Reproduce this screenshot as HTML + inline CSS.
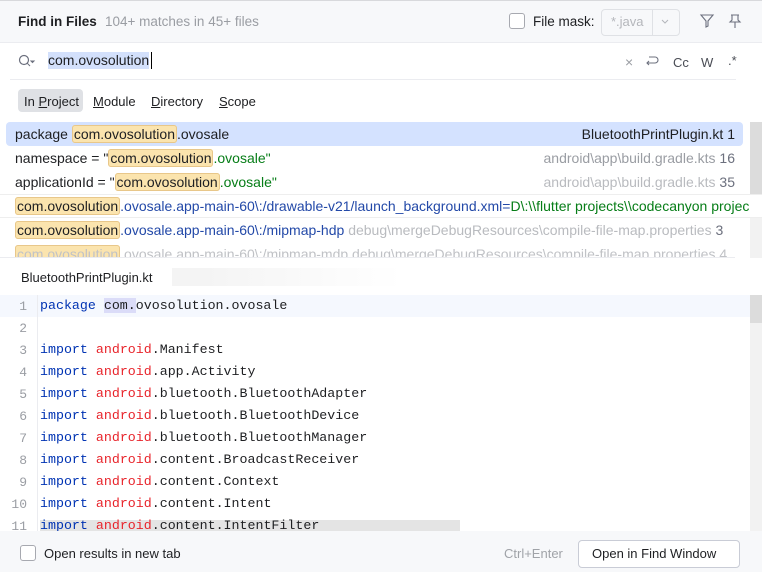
<!DOCTYPE html>
<html><head><meta charset="utf-8"><style>
*{margin:0;padding:0;box-sizing:border-box}
body{width:762px;height:572px;overflow:hidden;background:#fff;font-family:"Liberation Sans",sans-serif;font-size:13px;color:#1e1f22;position:relative}
.a{position:absolute;white-space:nowrap}
.r{font-size:14px}
.hl{background:#fbe4ae;border:1px solid #e8c78a;border-radius:3px;padding:0 1px}
.g{color:#9a9da3}
.gr{color:#067d17}
.bl{color:#2349a8}
.code{font-family:"Liberation Mono",monospace;font-size:13.3px}
.kw{color:#0033b3}.pk{color:#e8242b}
.ln{font-family:"Liberation Mono",monospace;font-size:13px;color:#9a9da3;width:27px;text-align:right}
u{text-decoration:underline}
</style></head><body>
<div class="a" style="left:0;top:0;width:762px;height:43px;background:#f7f8fa;border-bottom:1px solid #ebecf0;border-top:1px solid #d8d9dc"></div>
<div class="a" style="left:18px;top:14px;font-weight:bold;font-size:13.5px">Find in Files</div>
<div class="a g" style="left:105px;top:14px;font-size:13.5px">104+ matches in 45+ files</div>
<div class="a" style="left:509px;top:13px;width:16px;height:16px;border:1px solid #a7a9b0;border-radius:3px;background:#fff"></div>
<div class="a" style="left:533px;top:14px;font-size:13.5px">File mask:</div>
<div class="a" style="left:601px;top:9px;width:79px;height:27px;border:1px solid #dfe1e5;border-radius:4px;background:#f7f8fa"></div>
<div class="a" style="left:652px;top:10px;width:1px;height:25px;background:#dfe1e5"></div>
<div class="a" style="left:611px;top:14px;color:#b4b6bb">*.java</div>
<svg class="a" style="left:660px;top:18px" width="10" height="8"><path d="M2 2l3 3 3-3" stroke="#b4b6bb" fill="none"/></svg>
<svg class="a" style="left:699px;top:13px" width="16" height="16"><path d="M2 2h12l-5 6v5l-2 1V8z" stroke="#6c707e" fill="none" stroke-width="1.1"/></svg>
<svg class="a" style="left:727px;top:13px" width="16" height="16"><path d="M4 2h8M5 2v5l-2 2h10l-2-2V2M8 9v6" stroke="#6c707e" fill="none" stroke-width="1.1"/></svg>

<svg class="a" style="left:17px;top:53px" width="20" height="16"><circle cx="7" cy="7" r="4.5" stroke="#6c707e" fill="none" stroke-width="1.2"/><path d="M10 10l3 3M14 8l1.5 1.5L17 8z" stroke="#6c707e" fill="#6c707e"/></svg>
<div class="a r" style="left:48px;top:52px;background:#d3e0fb;line-height:17px">com.ovosolution</div>
<div class="a" style="left:151px;top:52px;width:1px;height:17px;background:#000"></div>
<div class="a g" style="left:625px;top:54px;font-size:14px">×</div>
<svg class="a" style="left:644px;top:53px" width="16" height="16"><path d="M5 4h6a3 3 0 010 6H3M5 8l-2 2 2 2" stroke="#6c707e" fill="none" stroke-width="1.1"/></svg>
<div class="a" style="left:673px;top:55px;color:#4a4d55">Cc</div>
<div class="a" style="left:701px;top:55px;color:#4a4d55">W</div>
<div class="a" style="left:728px;top:53px;color:#4a4d55">.*</div>
<div class="a" style="left:10px;top:79px;width:726px;height:1px;background:#ebecf0"></div>

<div class="a" style="left:18px;top:89px;width:65px;height:23px;background:#dfe1e5;border-radius:4px"></div>
<div class="a" style="left:24px;top:94px">In <u>P</u>roject</div>
<div class="a" style="left:93px;top:94px"><u>M</u>odule</div>
<div class="a" style="left:151px;top:94px"><u>D</u>irectory</div>
<div class="a" style="left:219px;top:94px"><u>S</u>cope</div>

<div class="a" style="left:6px;top:122px;width:737px;height:24px;background:#d4e2ff;border-radius:4px"></div>
<div class="a" style="left:750px;top:122px;width:12px;height:136px;background:#f2f2f2"></div>
<div class="a" style="left:750px;top:122px;width:12px;height:96px;background:#dcdcdc"></div>
<div class="a r" style="left:15px;top:126px">package <span class="hl">com.ovosolution</span>.ovosale</div>
<div class="a r" style="right:27px;top:126px">BluetoothPrintPlugin.kt 1</div>
<div class="a r" style="left:15px;top:150px">namespace = "<span class="hl">com.ovosolution</span><span class="gr">.ovosale"</span></div>
<div class="a g r" style="right:27px;top:150px">android\app\build.gradle.kts <span style="color:#6c707e">16</span></div>
<div class="a r" style="left:15px;top:174px">applicationId = "<span class="hl">com.ovosolution</span><span class="gr">.ovosale"</span></div>
<div class="a r" style="right:27px;top:174px;color:#b9bbbf">android\app\build.gradle.kts <span style="color:#6c707e">35</span></div>
<div class="a" style="left:0;top:194px;width:762px;height:24px;background:#fff;border-top:1px solid #eee;border-bottom:1px solid #eee"></div>
<div class="a r" style="left:15px;top:198px"><span class="hl">com.ovosolution</span><span class="bl">.ovosale.app-main-60\:/drawable-v21/launch_background.xml=</span><span class="gr">D\:\\flutter projects\\codecanyon projec</span></div>
<div class="a r" style="left:15px;top:222px"><span class="hl">com.ovosolution</span><span class="bl">.ovosale.app-main-60\:/mipmap-hdp</span> <span style="color:#b9bbbf">debug\mergeDebugResources\compile-file-map.properties</span> <span style="color:#6c707e">3</span></div>
<div class="a" style="left:0;top:242px;width:750px;height:16px;overflow:hidden"><div class="a r" style="left:15px;top:4px;color:#c0c2c6"><span class="hl">com.ovosolution</span>.ovosale.app-main-60\:/mipmap-mdp debug\mergeDebugResources\compile-file-map.properties 4</div></div>
<div class="a" style="left:0;top:257px;width:735px;height:1px;background:#ebecf0"></div>

<div class="a" style="left:172px;top:268px;width:30px;height:18px;background:#f4f4f4"></div>
<div class="a" style="left:202px;top:268px;width:200px;height:18px;background:linear-gradient(90deg,#f4f4f4,#fff)"></div>
<div class="a" style="left:21px;top:270px">BluetoothPrintPlugin.kt</div>

<div class="a" style="left:0;top:295px;width:750px;height:22px;background:#f5f8fe"></div>
<div class="a" style="left:750px;top:295px;width:12px;height:236px;background:#f2f2f2"></div>
<div class="a" style="left:750px;top:295px;width:12px;height:28px;background:#dcdcdc"></div>
<div class="a" style="left:37px;top:295px;width:1px;height:236px;background:#ebecf0"></div>
<div class="a" style="left:40px;top:520px;width:420px;height:11px;background:#e4e4e4"></div>

<div class="a ln" style="left:0;top:299px">1</div>
<div class="a code" style="left:40px;top:298px"><span class="kw">package</span> <span style="background:#dbdcf8">com.</span>ovosolution.ovosale</div>
<div class="a ln" style="left:0;top:321px">2</div>
<div class="a ln" style="left:0;top:343px">3</div><div class="a code" style="left:40px;top:342px"><span class="kw">import</span> <span class="pk">android</span>.Manifest</div>
<div class="a ln" style="left:0;top:365px">4</div><div class="a code" style="left:40px;top:364px"><span class="kw">import</span> <span class="pk">android</span>.app.Activity</div>
<div class="a ln" style="left:0;top:387px">5</div><div class="a code" style="left:40px;top:386px"><span class="kw">import</span> <span class="pk">android</span>.bluetooth.BluetoothAdapter</div>
<div class="a ln" style="left:0;top:409px">6</div><div class="a code" style="left:40px;top:408px"><span class="kw">import</span> <span class="pk">android</span>.bluetooth.BluetoothDevice</div>
<div class="a ln" style="left:0;top:431px">7</div><div class="a code" style="left:40px;top:430px"><span class="kw">import</span> <span class="pk">android</span>.bluetooth.BluetoothManager</div>
<div class="a ln" style="left:0;top:453px">8</div><div class="a code" style="left:40px;top:452px"><span class="kw">import</span> <span class="pk">android</span>.content.BroadcastReceiver</div>
<div class="a ln" style="left:0;top:475px">9</div><div class="a code" style="left:40px;top:474px"><span class="kw">import</span> <span class="pk">android</span>.content.Context</div>
<div class="a ln" style="left:0;top:497px">10</div><div class="a code" style="left:40px;top:496px"><span class="kw">import</span> <span class="pk">android</span>.content.Intent</div>
<div class="a" style="left:0;top:515px;width:750px;height:16px;overflow:hidden"><div class="a ln" style="left:0;top:4px">11</div><div class="a code" style="left:40px;top:3px"><span class="kw">import</span> <span class="pk">android</span>.content.IntentFilter</div></div>

<div class="a" style="left:0;top:531px;width:762px;height:41px;background:#f7f8fa"></div>
<div class="a" style="left:20px;top:545px;width:16px;height:16px;border:1px solid #a7a9b0;border-radius:3px;background:#fff"></div>
<div class="a" style="left:44px;top:546px">Open results in new tab</div>
<div class="a" style="left:504px;top:546px;color:#a0a3a8">Ctrl+Enter</div>
<div class="a" style="left:578px;top:540px;width:162px;height:28px;border:1px solid #c9ccd6;border-radius:4px;background:#fff"></div>
<div class="a" style="left:592px;top:546px">Open in Find Window</div>
</body></html>
